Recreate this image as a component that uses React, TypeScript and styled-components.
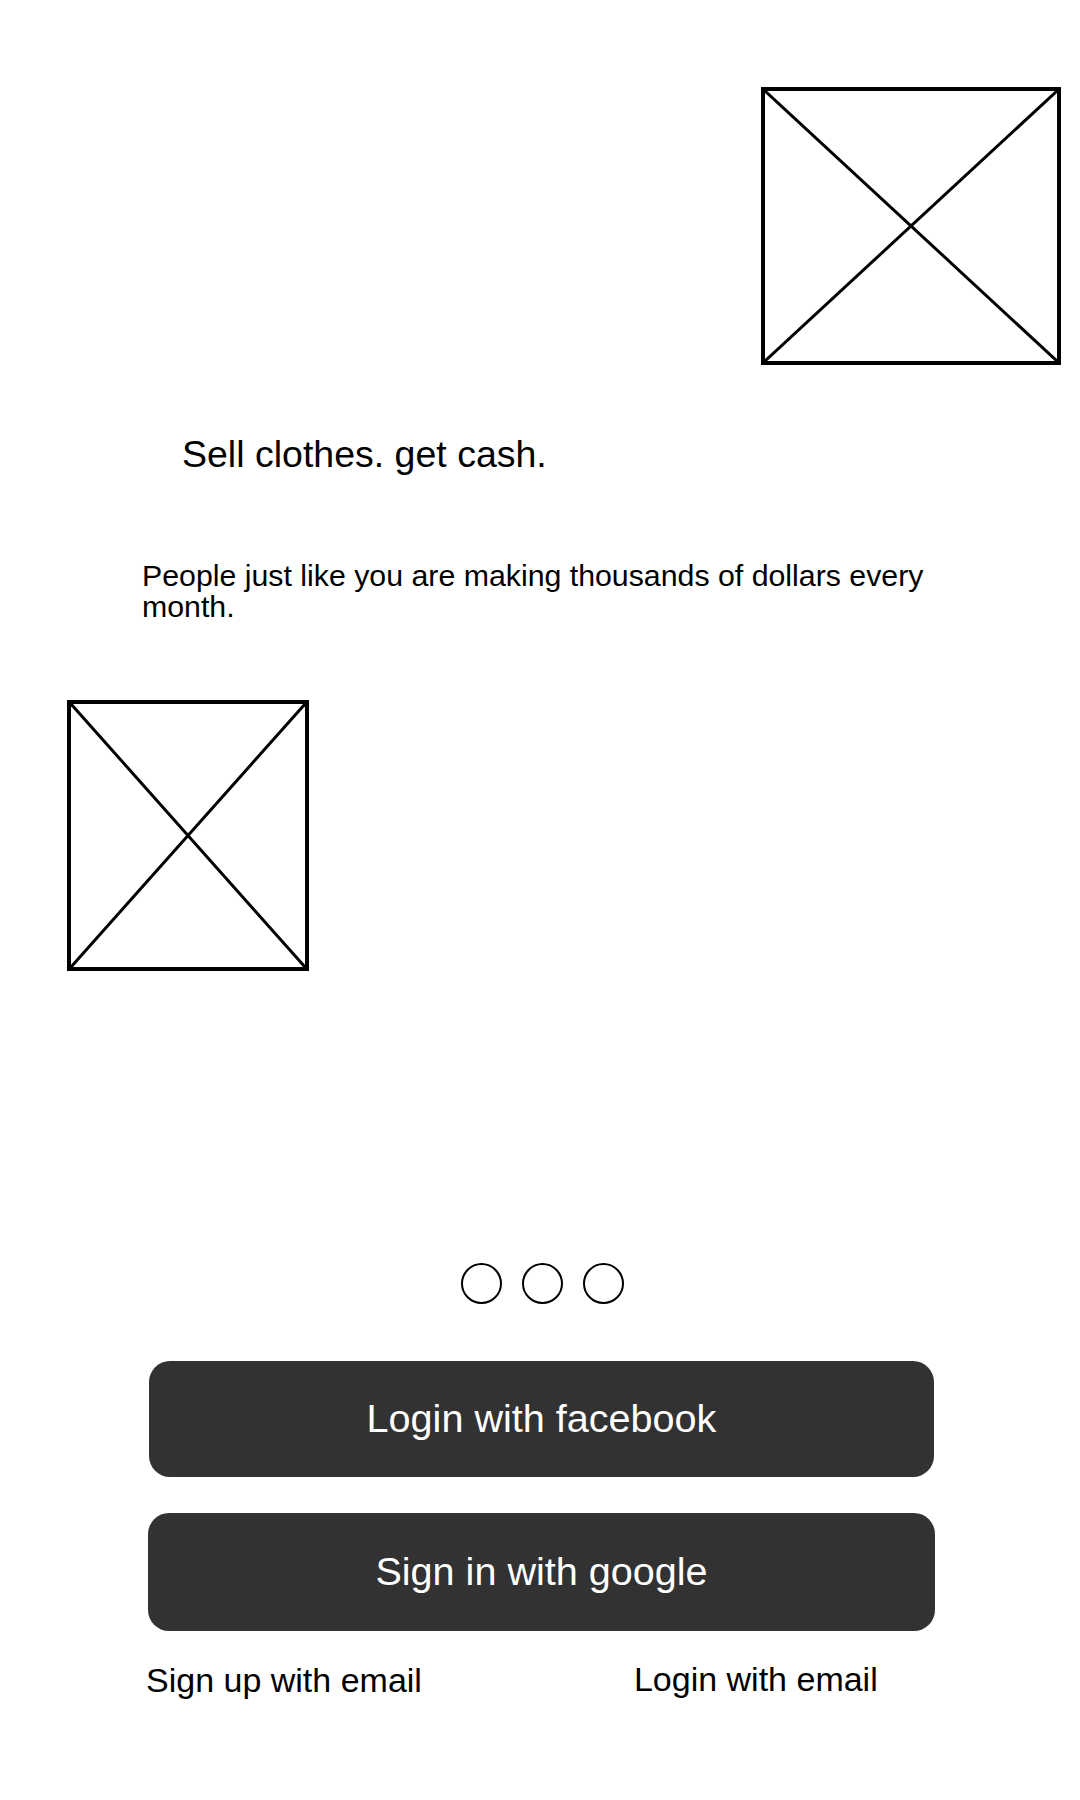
import React from "react";
import styled, { createGlobalStyle } from "styled-components";

const GlobalStyle = createGlobalStyle`
  html, body {
    margin: 0;
    padding: 0;
    background: #ffffff;
  }
  body {
    font-family: "Liberation Sans", Arial, sans-serif;
    color: #000000;
  }
`;

const Page = styled.div`
  width: 1080px;
  min-height: 1800px;
  display: flex;
  flex-direction: column;
  align-items: flex-start;
  padding-top: 87px;
  box-sizing: border-box;
  background: #ffffff;
`;

const Placeholder = styled.div<{ $w: number; $h: number; $left: number; $top: number }>`
  position: relative;
  width: ${(p) => p.$w}px;
  height: ${(p) => p.$h}px;
  margin-left: ${(p) => p.$left}px;
  margin-top: ${(p) => p.$top}px;
  border: 4px solid #000;
  box-sizing: border-box;
  flex-shrink: 0;

  svg {
    display: block;
    width: 100%;
    height: 100%;
  }
`;

const Heading = styled.h1`
  margin: 71px 0 0 182px;
  font-family: "Liberation Sans", Arial, sans-serif;
  font-weight: 400;
  font-size: 37.5px;
  line-height: 1;
  color: #000;
`;

const Lead = styled.p`
  margin: 86px 0 0 142px;
  width: 800px;
  font-family: "Liberation Sans", Arial, sans-serif;
  font-size: 30.3px;
  line-height: 31px;
  color: #000;
`;

const Dots = styled.div`
  display: flex;
  gap: 20px;
  margin: 292px 0 0 461px;
`;

const Dot = styled.span`
  display: block;
  width: 41px;
  height: 41px;
  border: 2px solid #000;
  border-radius: 50%;
  box-sizing: border-box;
`;

const ActionButton = styled.button<{ $left: number; $top: number; $w: number; $h: number }>`
  display: flex;
  align-items: center;
  justify-content: center;
  margin: ${(p) => p.$top}px 0 0 ${(p) => p.$left}px;
  width: ${(p) => p.$w}px;
  height: ${(p) => p.$h}px;
  padding: 0;
  border: none;
  border-radius: 21px;
  background: #323232;
  color: #ffffff;
  font-family: "Liberation Sans", Arial, sans-serif;
  font-size: 39.6px;
  line-height: 1;
  cursor: pointer;
`;

const LinkRow = styled.div`
  display: flex;
  align-items: flex-start;
  margin: 32px 0 0 146px;
`;

const TextLink = styled.a<{ $offset?: number }>`
  display: block;
  margin-left: ${(p) => p.$offset ?? 0}px;
  margin-top: ${(p) => (p.$offset ? -1 : 0)}px;
  font-family: "Liberation Sans", Arial, sans-serif;
  font-size: 34px;
  line-height: 1;
  color: #000;
  text-decoration: none;
  cursor: pointer;
`;

const Cross: React.FC = () => (
  <svg viewBox="0 0 100 100" preserveAspectRatio="none">
    <line x1="0" y1="0" x2="100" y2="100" stroke="#000" strokeWidth="3" vectorEffect="non-scaling-stroke" />
    <line x1="100" y1="0" x2="0" y2="100" stroke="#000" strokeWidth="3" vectorEffect="non-scaling-stroke" />
  </svg>
);

export default function App() {
  return (
    <>
      <GlobalStyle />
      <Page>
        <Placeholder $w={300} $h={278} $left={761} $top={0}>
          <Cross />
        </Placeholder>
        <Heading>Sell clothes. get cash.</Heading>
        <Lead>People just like you are making thousands of dollars every month.</Lead>
        <Placeholder $w={242} $h={271} $left={67} $top={78}>
          <Cross />
        </Placeholder>
        <Dots>
          <Dot />
          <Dot />
          <Dot />
        </Dots>
        <ActionButton $left={149} $top={57} $w={785} $h={116}>
          Login with facebook
        </ActionButton>
        <ActionButton $left={148} $top={36} $w={787} $h={118}>
          Sign in with google
        </ActionButton>
        <LinkRow>
          <TextLink>Sign up with email</TextLink>
          <TextLink $offset={212}>Login with email</TextLink>
        </LinkRow>
      </Page>
    </>
  );
}
